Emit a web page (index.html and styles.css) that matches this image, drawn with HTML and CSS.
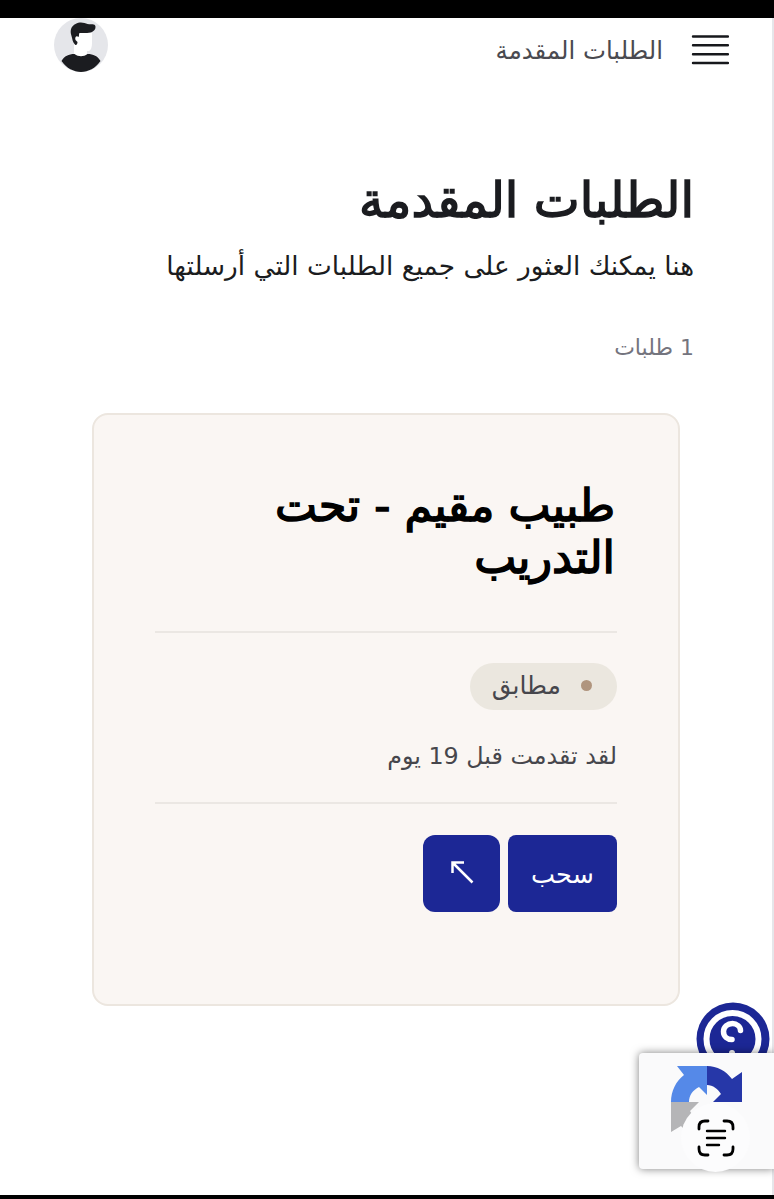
FILE: index.html
```html
<!DOCTYPE html>
<html lang="ar" dir="rtl">
<head>
  <meta charset="UTF-8">
  <meta name="viewport" content="width=device-width, initial-scale=1.0">
  <title>الطلبات المقدمة</title>
  <link rel="stylesheet" href="styles.css">
</head>
<body>
  <div class="page">
    <header class="topbar">
      <button class="menu-btn" aria-label="القائمة">
        <svg width="38" height="32" viewBox="0 0 38 32" stroke="#17181c" stroke-width="2.4" stroke-linecap="round">
          <path d="M2 2.500h35M2 11.300h35M2 20.200h35M2 29h35"/>
        </svg>
      </button>
      <span class="topbar-title">الطلبات المقدمة</span>
      <svg class="avatar" width="54" height="54" viewBox="0 0 54 54">
        <circle cx="27" cy="27" r="27" fill="#e5e6ea"/>
        <path d="M23 15h15l0 10c0 4-1 7-3 8h-2v4l-6 4c-4 0-7-2-7-4V24z" fill="#fff"/>
        <path d="M20.500 26c-2-2-2-5-3-8-2-6 0-10 4-12 5-3 9-1 12 0 3 1 8-1 8 3 0 5-6 6-10 6h-6c-1 1 0 3-1 4-2-2-4 0-3 3l2 2c0 3-2 4-3 2z" fill="#1b1c20"/>
        <path d="M7.500 43c3-5 7-7 13-7 4 3 9 3 13 0 6 0 10 2 13 7-10 14.500-29 14.500-39 0z" fill="#1b1c20"/>
      </svg>
    </header>

    <main class="content">
      <h1>الطلبات المقدمة</h1>
      <p class="intro">هنا يمكنك العثور على جميع الطلبات التي أرسلتها</p>
      <p class="count">1 طلبات</p>

      <article class="card">
        <h2>طبيب مقيم - تحت<br>التدريب</h2>
        <div class="card-status">
          <span class="badge"><span class="dot"></span><span class="badge-text">مطابق</span></span>
          <p class="applied">لقد تقدمت قبل 19 يوم</p>
        </div>
        <div class="actions">
          <button class="btn"><span class="btn-text">سحب</span></button>
          <button class="btn btn-icon" aria-label="فتح">
            <svg width="24" height="24" viewBox="0 0 24 24" fill="none" stroke="#fff" stroke-width="2.500">
              <path d="M2.500 13V2.500h11.500M2.500 2.500l20 20"/>
            </svg>
          </button>
        </div>
      </article>
    </main>
  </div>

  <div class="help">
    <svg width="74" height="74" viewBox="0 0 74 74" fill="none">
      <circle cx="37" cy="37" r="36.500" fill="#1c2795"/>
      <circle cx="36.500" cy="37" r="26" stroke="#fff" stroke-width="6"/>
      <path d="M44.500 28.500c0-4-4-7-8-7-5 0-9 3.500-9 8 0 5 4 8 8.500 8" stroke="#fff" stroke-width="5.500" stroke-linecap="round"/>
      <circle cx="36" cy="51" r="3" fill="#fff"/>
    </svg>
  </div>

  <div class="recaptcha">
    <svg width="72" height="72" viewBox="0 0 72 72">
      <path d="M0 36C0 25 5 15 13 9L6 0h30v29l-8-8c-6 3-10 8-10 15z" fill="#5589e8"/>
      <path d="M36 0c10 0 19 5 25 13l10-7v30H42l8-8c-3-5-8-9-14-9z" fill="#2637a8"/>
      <path d="M0 36h28l-9 9c3 6 9 9 17 9v18c-11 0-20-5-26-12L0 66z" fill="#b5b5b7"/>
    </svg>
  </div>

  <button class="scan" aria-label="مسح النص">
    <svg width="38" height="38" viewBox="0 0 38 38" fill="none" stroke="#000" stroke-width="2.800" stroke-linecap="round">
      <path d="M2 10V8c0-4 2-6 6-6h3M27 2h3c4 0 6 2 6 6v2M36 28v2c0 4-2 6-6 6h-3M11 36H8c-4 0-6-2-6-6v-2"/>
      <path d="M10 12h18M10 19h18M10 26h12" stroke-width="2.400"/>
    </svg>
  </button>
</body>
</html>
```
FILE: styles.css
```css
* {
  box-sizing: border-box;
}
body {
  margin: 0;
  height: 1199px;
  overflow: hidden;
  background: #fff;
  font-family: "DejaVu Sans", sans-serif;
  color: #1b1c20;
}
.page {
  height: 1199px;
  border-top: 18px solid #000;
  border-bottom: 4px solid #000;
  box-shadow: inset -2px 0 #e6e6ea;
}
h1, h2, p {
  margin: 0;
}
button {
  border: none;
  padding: 0;
  font-family: inherit;
}
svg {
  display: block;
}
.topbar {
  display: flex;
  align-items: center;
  height: 64px;
  padding: 0 45px 0 54px;
}
.menu-btn {
  background: none;
}
.topbar-title {
  margin-right: 28px;
  font-size: 24.4px;
  color: #4a4a50;
}
.avatar {
  margin: -10px auto 0 0;
}
.content {
  padding: 0 80px 0 92px;
}
h1 {
  margin-top: 85px;
  height: 71px;
  line-height: 68px;
  font-size: 48.8px;
  font-weight: normal;
  -webkit-text-stroke: 1.5px #1b1c20;
  white-space: nowrap;
}
.intro {
  height: 56px;
  line-height: 56px;
  font-size: 26.3px;
  white-space: nowrap;
}
.count {
  margin-top: 28px;
  height: 50px;
  line-height: 52px;
  font-size: 22px;
  color: #74747e;
}
.card {
  width: 588px;
  height: 593px;
  margin: 41px 14px 0 0;
  padding: 65px 61px 0;
  background: #faf6f3;
  border: 2px solid #ece6df;
  border-radius: 16px;
}
h2 {
  height: 151px;
  padding-right: 2px;
  line-height: 52px;
  font-size: 44.7px;
  font-weight: normal;
  -webkit-text-stroke: 1.5px #000;
  color: #000;
  white-space: nowrap;
}
.card-status {
  height: 173px;
  padding-top: 30px;
  border-top: 2px solid #ebe7e3;
  border-bottom: 2px solid #ebe7e3;
}
.badge {
  display: flex;
  align-items: center;
  width: 147px;
  height: 47px;
  padding-right: 25px;
  padding-bottom: 3px;
  border-radius: 24px;
  background: #ebe7df;
  color: #46464c;
  font-size: 25px;
}
.dot {
  width: 11px;
  height: 11px;
  margin-left: 20px;
  border-radius: 50%;
  background: #b0957e;
}
.applied {
  margin-top: 24px;
  height: 44px;
  line-height: 44px;
  font-size: 23.8px;
  color: #46464c;
}
.actions {
  display: flex;
  gap: 8px;
  margin-top: 31px;
}
.btn {
  width: 109px;
  height: 77px;
  border-radius: 8px;
  background: #1c2795;
  color: #fff;
  font-size: 25.5px;
}
.btn-icon {
  display: flex;
  align-items: center;
  justify-content: center;
  width: 77px;
  padding-bottom: 3px;
  border-radius: 12px;
}
.help {
  position: absolute;
  left: 696px;
  top: 1002px;
}
.recaptcha {
  position: absolute;
  left: 639px;
  top: 1053px;
  width: 135px;
  height: 116px;
  padding: 13px 0 0 32px;
  direction: ltr;
  background: #fafafb;
  border-radius: 4px 0 0 4px;
  box-shadow: 0 0 9px rgba(0, 0, 0, 0.5);
}
.scan {
  position: absolute;
  left: 681px;
  top: 1103px;
  display: flex;
  align-items: center;
  justify-content: center;
  width: 69px;
  height: 69px;
  border-radius: 50%;
  background: #fcfcfd;
}
```
